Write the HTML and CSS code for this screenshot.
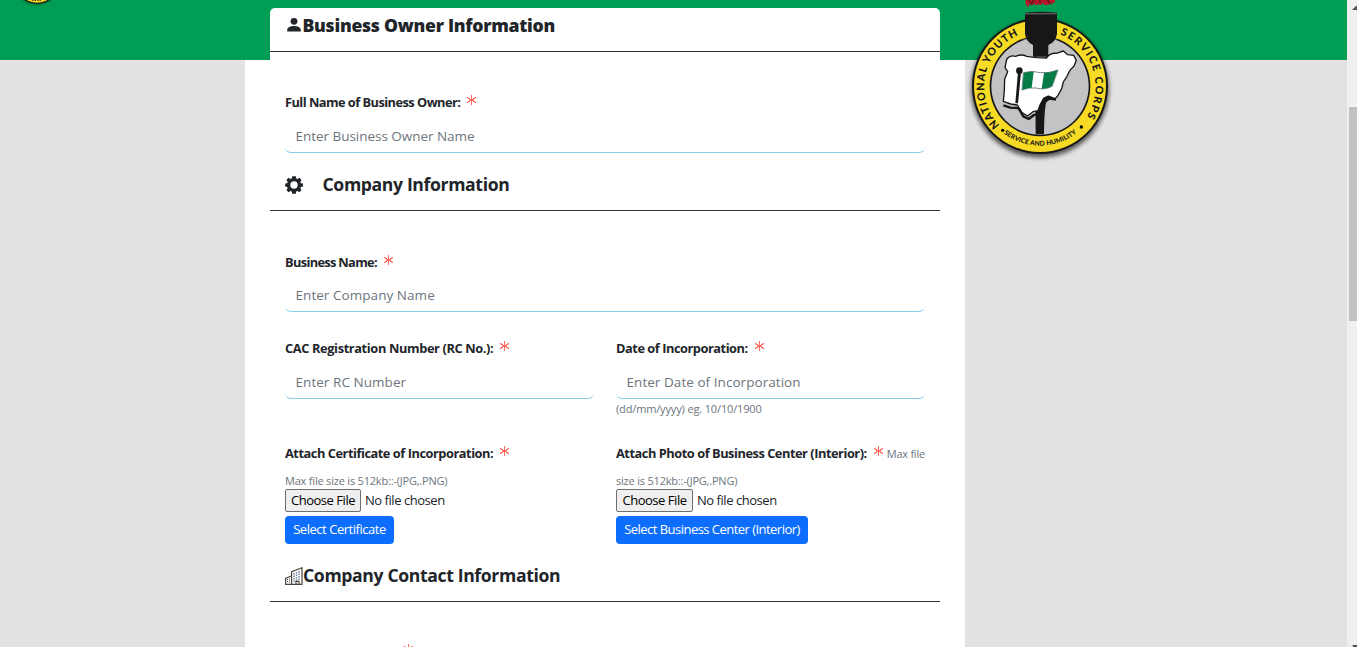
FILE: index.html
```
<!DOCTYPE html>
<html lang="en">
<head>
<meta charset="utf-8">
<title>Business Registration</title>
<link rel="stylesheet" href="styles.css">
</head>
<body>
<div class="viewport">
  <main class="page">
    <div class="sheet">
      <form class="card">
        <h2 class="section first">
          <svg class="ico-person" width="16" height="16" viewBox="0 0 16 16"><circle cx="8" cy="4.3" r="3.4"/><path d="M1.2 14.4v-1.6c0-2.3 3.6-3.7 6.8-3.7s6.8 1.4 6.8 3.7v1.6z"/></svg>
          <span class="t-owner">Business Owner Information</span>
        </h2>
        <div class="field row-a">
          <label class="label k1">Full Name of Business Owner:<i class="star"></i></label>
          <input class="input p1" placeholder="Enter Business Owner Name">
        </div>
        <h2 class="section">
          <svg class="ico-gear" width="18" height="18" viewBox="0 0 18 18"><path fill-rule="evenodd" d="M7.2.3h3.6l.4 2.3 1.3.5 1.9-1.3 2.2 2.2-1.3 1.9.5 1.3 2.2.4v2.8l-2.2.5-.5 1.4 1.3 1.8-2.2 2.2-1.9-1.3-1.3.5-.4 2.3H7.2l-.4-2.3-1.3-.5-1.9 1.3-2.2-2.2 1.3-1.8-.5-1.4L.2 10.4V7.6l2-.4.5-1.3L1.4 4l2.2-2.2 1.9 1.3 1.3-.5zM9 5.300a3.700 3.700 0 1 0 0 7.400 3.700 3.700 0 0 0 0-7.400z"/></svg>
          <span>Company Information</span>
        </h2>
        <div class="field row-b">
          <label class="label k2">Business Name:<i class="star"></i></label>
          <input class="input" placeholder="Enter Company Name">
        </div>
        <div class="cols row-c">
          <div class="field">
            <label class="label k3">CAC Registration Number (RC No.):<i class="star"></i></label>
            <input class="input" placeholder="Enter RC Number">
          </div>
          <div class="field">
            <label class="label">Date of Incorporation:<i class="star"></i></label>
            <input class="input" placeholder="Enter Date of Incorporation">
            <small class="hint date">(dd/mm/yyyy) eg. 10/10/1900</small>
          </div>
        </div>
        <div class="cols row-d">
          <div class="upload">
            <label class="label">Attach Certificate of Incorporation:<i class="star"></i></label>
            <small class="hint">Max file size is 512kb::-(JPG,.PNG)</small>
            <div class="file"><span class="choose">Choose File</span><span class="none">No file chosen</span></div>
            <button type="button" class="btn b1">Select Certificate</button>
          </div>
          <div class="upload">
            <label class="label">Attach Photo of Business Center (Interior):<i class="star"></i><small class="hint tail">Max file</small></label>
            <small class="hint">size is 512kb::-(JPG,.PNG)</small>
            <div class="file"><span class="choose wide">Choose File</span><span class="none">No file chosen</span></div>
            <button type="button" class="btn b2">Select Business Center (Interior)</button>
          </div>
        </div>
        <h2 class="section">
          <svg class="ico-bldg" width="18" height="18" viewBox="0 0 18 18"><path d="M.6 17.400v-6l6-2.700v-4L17 .8v16.600zM6.600 8.700v8.700" class="bl"/><path d="M2.500 12v4M4.500 11.300v4.700" class="bd"/><path d="M9 6v9M11.500 5V14M14 4v10" class="bw"/><path d="M11 17.400v-3h3v3" class="bl"/></svg>
          <span>Company Contact Information</span>
        </h2>
        <div class="field row-e"><label class="label"><i class="star next"></i></label></div>
      </form>
    </div>
  </main>
  <div class="scrollbar"><i class="up"></i><i class="thumb"></i><i class="down"></i></div>
</div>

<svg class="corner" width="80" height="10" viewBox="0 0 80 10">
  <defs><filter id="soft2" x="-20%" y="-20%" width="140%" height="140%"><feGaussianBlur stdDeviation="1"/></filter></defs>
  <circle cx="37" cy="-18.500" r="23.500" fill="#063" filter="url(#soft2)"/>
  <circle cx="37" cy="-19" r="22.800" fill="#151515"/><circle cx="37" cy="-19" r="21.700" fill="#f5da28"/>
  <path d="M32 .5h10" stroke="#554a12" stroke-width="1.200" stroke-dasharray="1.500 1"/>
</svg>

<svg class="emblem" width="160" height="165" viewBox="0 0 480 495">
  <defs>
    <filter id="soft" x="-20%" y="-20%" width="140%" height="140%"><feGaussianBlur stdDeviation="6"/></filter>
    <path id="arcL" d="M119 376A168 168 0 0 1 209 95"/>
    <path id="arcR" d="M289 99A168 168 0 0 1 369 365"/>
    <path id="arcB" d="M119 390A179 179 0 0 0 361 390"/>
  </defs>
  <circle cx="240" cy="266" r="207" fill="#000" opacity=".6" filter="url(#soft)"/>
  <path d="M197 0v12q3 10 10 8v-8q12 8 16-2 4 10 12 2 8 8 14-3 6 10 14 5 12 0 22-8V0z" fill="#b5182a"/>
  <path d="M206 0l8 12 8-12M240 0v9M262 0l8 11" stroke="#5d1a18" stroke-width="4" fill="none"/>
  <circle cx="240" cy="258" r="204" fill="#171717"/>
  <circle cx="240" cy="258" r="198" fill="#f6da24"/>
  <circle cx="240" cy="258" r="151" fill="#171717"/>
  <circle cx="240" cy="258" r="146" fill="#c3c3c5"/>
  <path d="M226 285h60l-28 20q-6 40-6 98h-25z" fill="#171717"/>
  <path d="M195 38q47-5 96 0v65q-5 25-26 32v35h-46v-35q-20-9-24-32z" fill="#171717"/>
  <path d="M195 41h95" stroke="#555" stroke-width="5"/>
  <path d="M140 178q10-14 27-9 18-8 33 0 18 3 33 4l26 1q12-16 30-14l21-7 13 11 18 2 8 15-7 17-13 14-8 17-11 17-5 20-12 22-8 8-20-8-14 7-11 20-6 17-15 3-16 13-17-10-14-23-20-3-22-8 3-33 1-34 9-22-8-12z" fill="#fff" stroke="#171717" stroke-width="4" stroke-linejoin="round"/>
  <path d="M130 316l21 7 24 1 15 25 16 8 16-12 18-5 8-19 8-16 12-9 20 3" fill="none" stroke="#171717" stroke-width="7" stroke-linejoin="round"/>
  <path d="M174 215l9 2-9 93h-8z" fill="#171717"/><circle cx="178" cy="212" r="10" fill="#171717"/>
  <path d="M190 218q28-8 51 0 27 2 53-8l-18 49q-24 12-48 5-23-3-42 6z" fill="#fff" stroke="#345" stroke-width="2"/>
  <path d="M191 219q17-5 30-3l-6 47q-15 1-28 7zM252 219q22-1 41-9l-17 49q-15 8-31 7z" fill="#087c46"/>
  <g class="ring">
    <text><textPath href="#arcL" textLength="324">NATIONAL YOUTH</textPath></text>
    <text><textPath href="#arcR" startOffset="12" textLength="296">SERVICE CORPS</textPath></text>
    <text class="motto"><textPath href="#arcB" startOffset="16" textLength="236">SERVICE AND HUMILITY</textPath></text>
  </g>
  <circle cx="128" cy="391" r="5"/><circle cx="364" cy="381" r="5"/>
</svg>
</body>
</html>
```
FILE: styles.css
```
* { box-sizing: border-box; }
body { margin: 0; overflow: hidden; font-family: "Open Sans", "Noto Sans", sans-serif; color: #212529; }
.viewport { display: flex; width: 1357px; height: 647px; overflow: hidden; }
.page { width: 1347px; height: 647px; overflow: hidden; padding-left: 245px; background: linear-gradient(#009e54 60px, #e2e2e2 60px); }
.sheet { width: 720px; height: 647px; padding: 8px 25px 0; background: linear-gradient(transparent 60px, #fff 60px); }
.card { width: 670px; height: 700px; background: #fff; border-radius: 5px 5px 0 0; }

.section { display: flex; align-items: center; height: 58px; margin: 0; padding: 5px 0 0 15px; border-bottom: 1px solid #303235; font-size: 17.6px; font-weight: 700; line-height: 24px; letter-spacing: -0.360px; white-space: nowrap; }
.section.first { height: 44px; padding: 0 0 9px 16px; font-weight: 800; }
.section svg { flex: none; fill: #212529; }
.t-owner { letter-spacing: -0.265px; }
.ico-person { margin-right: 0.500px; }
.section .ico-gear { margin: 1px 19.500px 0 0; }
.section .ico-bldg { margin-top: 1px; }
.ico-bldg .bl { fill: none; stroke: #4b443e; stroke-width: 1.200; }
.ico-bldg .bd { fill: none; stroke: #4b443e; stroke-width: 1; stroke-dasharray: 1 1; }
.ico-bldg .bw { fill: none; stroke: #7184a8; stroke-width: 1.500; stroke-dasharray: 1.500 1; }

.field, .upload { display: flex; flex-direction: column; align-items: flex-start; padding: 0; }
.row-a { padding: 40px 15px 0; }
.row-b { padding: 41px 15px 0; }
.row-e { padding: 39px 15px 0; }
.cols { display: grid; grid-template-columns: 309px 309px; gap: 22px; padding: 0 15px; }
.row-c { height: 131px; padding-top: 26px; }
.row-d { height: 101px; }

.label { display: flex; align-items: center; height: 20px; font-size: 12.800px; font-weight: 700; line-height: 20px; letter-spacing: -0.460px; white-space: nowrap; }
.k1 { letter-spacing: -0.530px; }
.k2 { letter-spacing: -0.660px; }
.k3 { letter-spacing: -0.370px; }
.star { width: 9px; height: 10px; margin: 0 0 4px 7px; background:
  linear-gradient(#ff6a5c, #ff6a5c) center / 1px 10px no-repeat,
  linear-gradient(30deg, transparent 44%, #ff6a5c 46% 54%, transparent 56%),
  linear-gradient(-30deg, transparent 44%, #ff6a5c 46% 54%, transparent 56%); }
.star.next { margin-left: 119px; }
.input { width: 100%; height: 34px; margin-top: 7px; padding: 0 10.500px; border: 0 solid transparent; border-bottom: 1px solid #87ceeb; border-radius: 6px; outline: 0; background: #fff; font: 400 13.500px "Open Sans", sans-serif; letter-spacing: 0.050px; }
.row-b .input { margin-top: 6px; }
.input::placeholder { color: #6c757d; opacity: 1; }
.p1 { letter-spacing: -0.035px; }
.hint { height: 16px; color: #6c757d; font-size: 11px; font-weight: 400; line-height: 16px; letter-spacing: -0.200px; white-space: nowrap; }
.date { margin-top: 2px; letter-spacing: -0.145px; }
.upload > .hint { margin-top: 10px; }
.tail { height: 15px; margin-left: 4px; letter-spacing: -0.250px; }

.file { display: flex; align-items: center; gap: 4px; height: 23px; font-size: 13px; letter-spacing: -0.460px; white-space: nowrap; }
.none { height: 20px; line-height: 19px; }
.choose { width: 76px; height: 23px; border: 1px solid #6e6e6e; border-radius: 2px; background: #efefef; color: #000; line-height: 21px; text-align: center; letter-spacing: -0.470px; }
.wide { width: 77px; }
.btn { height: 28px; margin-top: 4px; padding: 0 0 2px; border: 0; border-radius: 4px; background: #0d6efd; color: #fff; font: 400 13px/24px "Open Sans", sans-serif; letter-spacing: -0.460px; white-space: nowrap; }
.b1 { width: 109px; }
.b2 { width: 192px; letter-spacing: -0.535px; }

.scrollbar { position: relative; width: 10px; height: 647px; background: #f0f0f0; }
.thumb { position: absolute; top: 107px; left: 2px; width: 8px; height: 214px; background: #c1c1c1; }
.up { position: absolute; top: 6px; left: 5px; width: 5px; height: 4px; background: #505050; clip-path: polygon(0 100%, 80% 0, 100% 0, 100% 100%); }
.down { position: absolute; top: 645px; left: 5px; width: 5px; height: 2px; background: #505050; clip-path: polygon(0 0, 100% 0, 100% 100%, 30% 100%); }

.corner { position: absolute; top: 0; left: 0; }
.emblem { position: absolute; top: 0; left: 960px; }
.ring { fill: #171717; font: 900 32px Lato, "Open Sans", sans-serif; }
.motto { font-size: 20px; }
```
